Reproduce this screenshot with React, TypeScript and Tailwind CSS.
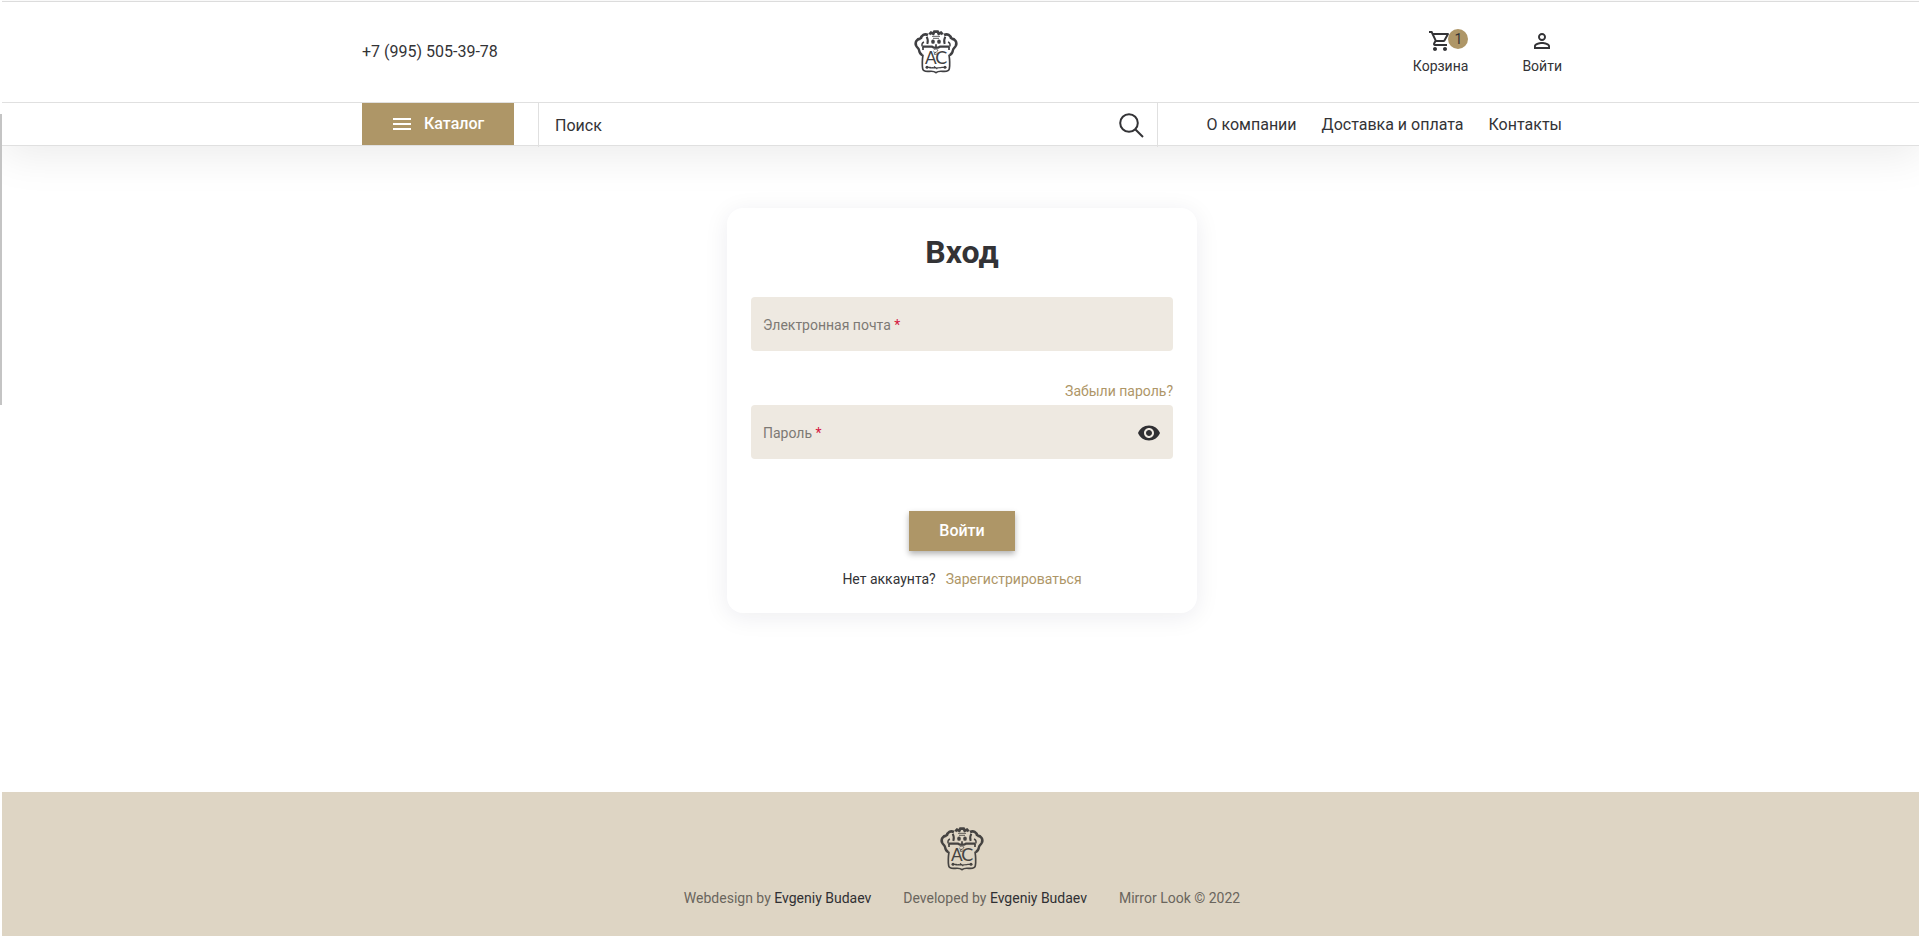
import React from "react";

function Crest({ className }: { className?: string }) {
  return (
    <svg viewBox="0 0 132 132" className={className} fill="none" stroke="currentColor" strokeLinejoin="miter">
      <path d="M46 13l5-5 7 3 3-6h10l3 6 7-3 5 5" strokeWidth="8" />
      <path d="M54 19h24M57 25h18" strokeWidth="2.5" />
      <path d="M42 15c-10-5-20 0-22 12" strokeWidth="8" />
      <path d="M90 15c10-5 20 0 22 12" strokeWidth="8" />
      <path d="M20 26C8 27 3 36 6 46" strokeWidth="8" />
      <path d="M112 26c12 1 17 10 14 20" strokeWidth="8" />
      <path d="M6 44c0 8 8 9 9 16 1 7 3 12 10 16" strokeWidth="7" />
      <path d="M126 44c0 8-8 9-9 16-1 7-3 12-10 16" strokeWidth="7" />
      <path d="M38 20c4 7 5 14 2 22M94 20c-4 7-5 14-2 22" strokeWidth="6" />
      <path d="M30 36c-6 2-7 7-6 13M102 36c6 2 7 7 6 13" strokeWidth="4" />
      <path d="M25 50h29l6 3h12l6-3h29" strokeWidth="6.5" />
      <ellipse cx="57" cy="35" rx="5.5" ry="6.5" fill="currentColor" stroke="none" />
      <ellipse cx="75" cy="35" rx="5.5" ry="6.5" fill="currentColor" stroke="none" />
      <path d="M66 43v8" strokeWidth="5" />
      <path d="M27 50v10M105 50v10" strokeWidth="5" />
      <path d="M27 74c-2 14-3 30-1 42 1 9 9 9 20 8 9-1 14-1 20 4 6-5 11-5 20-4 11 1 19 1 20-8 2-12 1-28-1-42" strokeWidth="5" />
      <path d="M59 60c5-5 14-3 12 3-4 5-12 4-10 10 4 2 9-1 10-5M58 65l8 4" strokeWidth="2.4" />
      <text x="33" y="103" fontSize="53" textLength="35" lengthAdjust="spacingAndGlyphs" fontFamily="Lato, sans-serif" fill="currentColor" stroke="none">A</text>
      <text x="64" y="103" fontSize="53" textLength="36" lengthAdjust="spacingAndGlyphs" fontFamily="Lato, sans-serif" fill="currentColor" stroke="none">C</text>
      <path d="M36 112h14M82 112h14M46 114l10-1 9 1 17-1M60 109l10 8" strokeWidth="3.5" />
      <circle cx="39" cy="112" r="4.5" fill="currentColor" stroke="none" />
      <circle cx="93" cy="112" r="4.5" fill="currentColor" stroke="none" />
    </svg>
  );
}

function MaterialIcon({ d, className }: { d: string; className?: string }) {
  return (
    <svg viewBox="0 0 24 24" className={className} fill="currentColor">
      <path d={d} />
    </svg>
  );
}

const CART =
  "M15.55 13c.75 0 1.41-.41 1.75-1.03l3.58-6.49c.37-.66-.11-1.48-.87-1.48H5.21l-.94-2H1v2h2l3.6 7.59-1.35 2.44C4.52 15.37 5.48 17 7 17h12v-2H7l1.1-2h7.45zM6.16 6h12.15l-2.76 5H8.53L6.16 6zM7 18c-1.1 0-1.99.9-1.99 2S5.9 22 7 22s2-.9 2-2-.9-2-2-2zm10 0c-1.1 0-1.99.9-1.99 2s.89 2 1.99 2 2-.9 2-2-.9-2-2-2z";
const PERSON =
  "M12 5.9a2.1 2.1 0 1 1 0 4.2 2.1 2.1 0 0 1 0-4.2m0 9c2.97 0 6.1 1.46 6.1 2.1v1.1H5.9V17c0-.64 3.13-2.1 6.1-2.1M12 4C9.79 4 8 5.79 8 8s1.79 4 4 4 4-1.79 4-4-1.79-4-4-4zm0 9c-2.67 0-8 1.34-8 4v3h16v-3c0-2.66-5.33-4-8-4z";
const MENU = "M3 18h18v-2H3v2zm0-5h18v-2H3v2zm0-7v2h18V6H3z";
const EYE =
  "M12 4.5C7 4.5 2.73 7.61 1 12c1.73 4.39 6 7.5 11 7.5s9.27-3.11 11-7.5c-1.73-4.39-6-7.5-11-7.5zM12 17c-2.76 0-5-2.24-5-5s2.24-5 5-5 5 2.24 5 5-2.24 5-5 5zm0-8c-1.66 0-3 1.34-3 3s1.34 3 3 3 3-1.34 3-3-1.34-3-3-3z";

function Header() {
  return (
    <header className="border-t border-[#dcdcdc] bg-white shadow-[0_10px_40px_rgba(0,0,0,0.08)]">
      <div className="mx-auto grid h-[100px] w-[1200px] grid-cols-3 items-center">
        <a href="#" className="text-base">+7 (995) 505-39-78</a>
        <Crest className="ml-[152px] h-11 w-11 text-[#3f3f42]" />
        <div className="flex justify-end gap-[54px] pb-0.5 text-sm leading-4">
          <a href="#" className="relative flex flex-col items-center gap-[5px]">
            <MaterialIcon d={CART} className="mr-0.5 h-6 w-6" />
            <span className="absolute right-0 top-0 flex h-5 w-5 items-center justify-center rounded-full bg-[#ae9667] text-sm">1</span>
            <span>Корзина</span>
          </a>
          <a href="#" className="flex flex-col items-center gap-[5px]">
            <MaterialIcon d={PERSON} className="h-6 w-6" />
            <span>Войти</span>
          </a>
        </div>
      </div>
      <div className="border-y border-[#e0e0e0]">
        <div className="mx-auto flex h-[42px] w-[1200px]">
          <button className="flex w-[152px] items-center gap-[10px] bg-[#ae9667] pb-px pl-7 font-medium text-white">
            <MaterialIcon d={MENU} className="h-6 w-6" />
            Каталог
          </button>
          <label className="-mb-0.5 ml-6 flex w-[620px] items-center border-x border-[#e0e0e0] pl-4 pr-[13px]">
            <span className="flex-1 pt-0.5">Поиск</span>
            <svg viewBox="0 0 25 25" className="h-[25px] w-[25px]" fill="none" stroke="currentColor" strokeWidth="2">
              <circle cx="10" cy="10" r="8.8" />
              <path d="M16.2 16.2l7.8 7.8" />
            </svg>
          </label>
          <nav className="flex flex-1 items-center justify-end gap-[25px] pt-px">
            <a href="#">О компании</a>
            <a href="#">Доставка и оплата</a>
            <a href="#">Контакты</a>
          </nav>
        </div>
      </div>
    </header>
  );
}

function Field({ label, children }: { label: string; children?: React.ReactNode }) {
  return (
    <label className="flex h-[54px] items-center justify-between rounded bg-[#eee9e1] px-3 text-sm text-[#7d7974]">
      <span className="pt-0.5">
        {label} <span className="text-[#d5173f]">*</span>
      </span>
      {children}
    </label>
  );
}

function LoginCard() {
  return (
    <form className="flex h-[405px] w-[470px] flex-col rounded-2xl bg-white px-6 pt-6 shadow-[0_4px_25px_rgba(20,20,60,0.08)]">
      <h1 className="text-center text-[32px] font-bold leading-10">Вход</h1>
      <div className="mt-[25px]">
        <Field label="Электронная почта" />
      </div>
      <a href="#" className="mt-[30px] self-end text-sm leading-5 text-[#ae9667]">Забыли пароль?</a>
      <div className="mt-1">
        <Field label="Пароль">
          <MaterialIcon d={EYE} className="mt-0.5 h-6 w-6 text-[#303033]" />
        </Field>
      </div>
      <button type="button" className="mt-[52px] h-10 w-[106px] self-center bg-[#ae9667] font-medium text-white shadow-[0_3px_6px_rgba(0,0,0,0.3)]">
        Войти
      </button>
      <p className="mt-[18px] flex justify-center gap-[10px] text-sm leading-5">
        <span>Нет аккаунта?</span>
        <a href="#" className="text-[#ae9667]">Зарегистрироваться</a>
      </p>
    </form>
  );
}

export default function App() {
  return (
    <div className="flex h-[936px] w-full overflow-hidden bg-white font-['Roboto',sans-serif] text-[#333336]">
      <div className="w-0.5 shrink-0 pt-[114px]">
        <div className="h-[291px] bg-[#c4c4c4]" />
      </div>
      <div className="flex h-full w-[1920px] shrink-0 flex-col overflow-hidden pt-px">
        <Header />
        <main className="flex flex-1 justify-center pt-[62px]">
          <LoginCard />
        </main>
        <footer className="flex h-36 flex-col items-center bg-[#ded5c4] pt-[35px] text-sm leading-5 text-[#6a655d]">
          <Crest className="h-11 w-11 text-[#454341]" />
          <div className="mt-[17px] flex gap-8">
            <span>Webdesign by <a href="#" className="text-[#303033]">Evgeniy Budaev</a></span>
            <span>Developed by <a href="#" className="text-[#303033]">Evgeniy Budaev</a></span>
            <span>Mirror Look © 2022</span>
          </div>
        </footer>
      </div>
    </div>
  );
}
